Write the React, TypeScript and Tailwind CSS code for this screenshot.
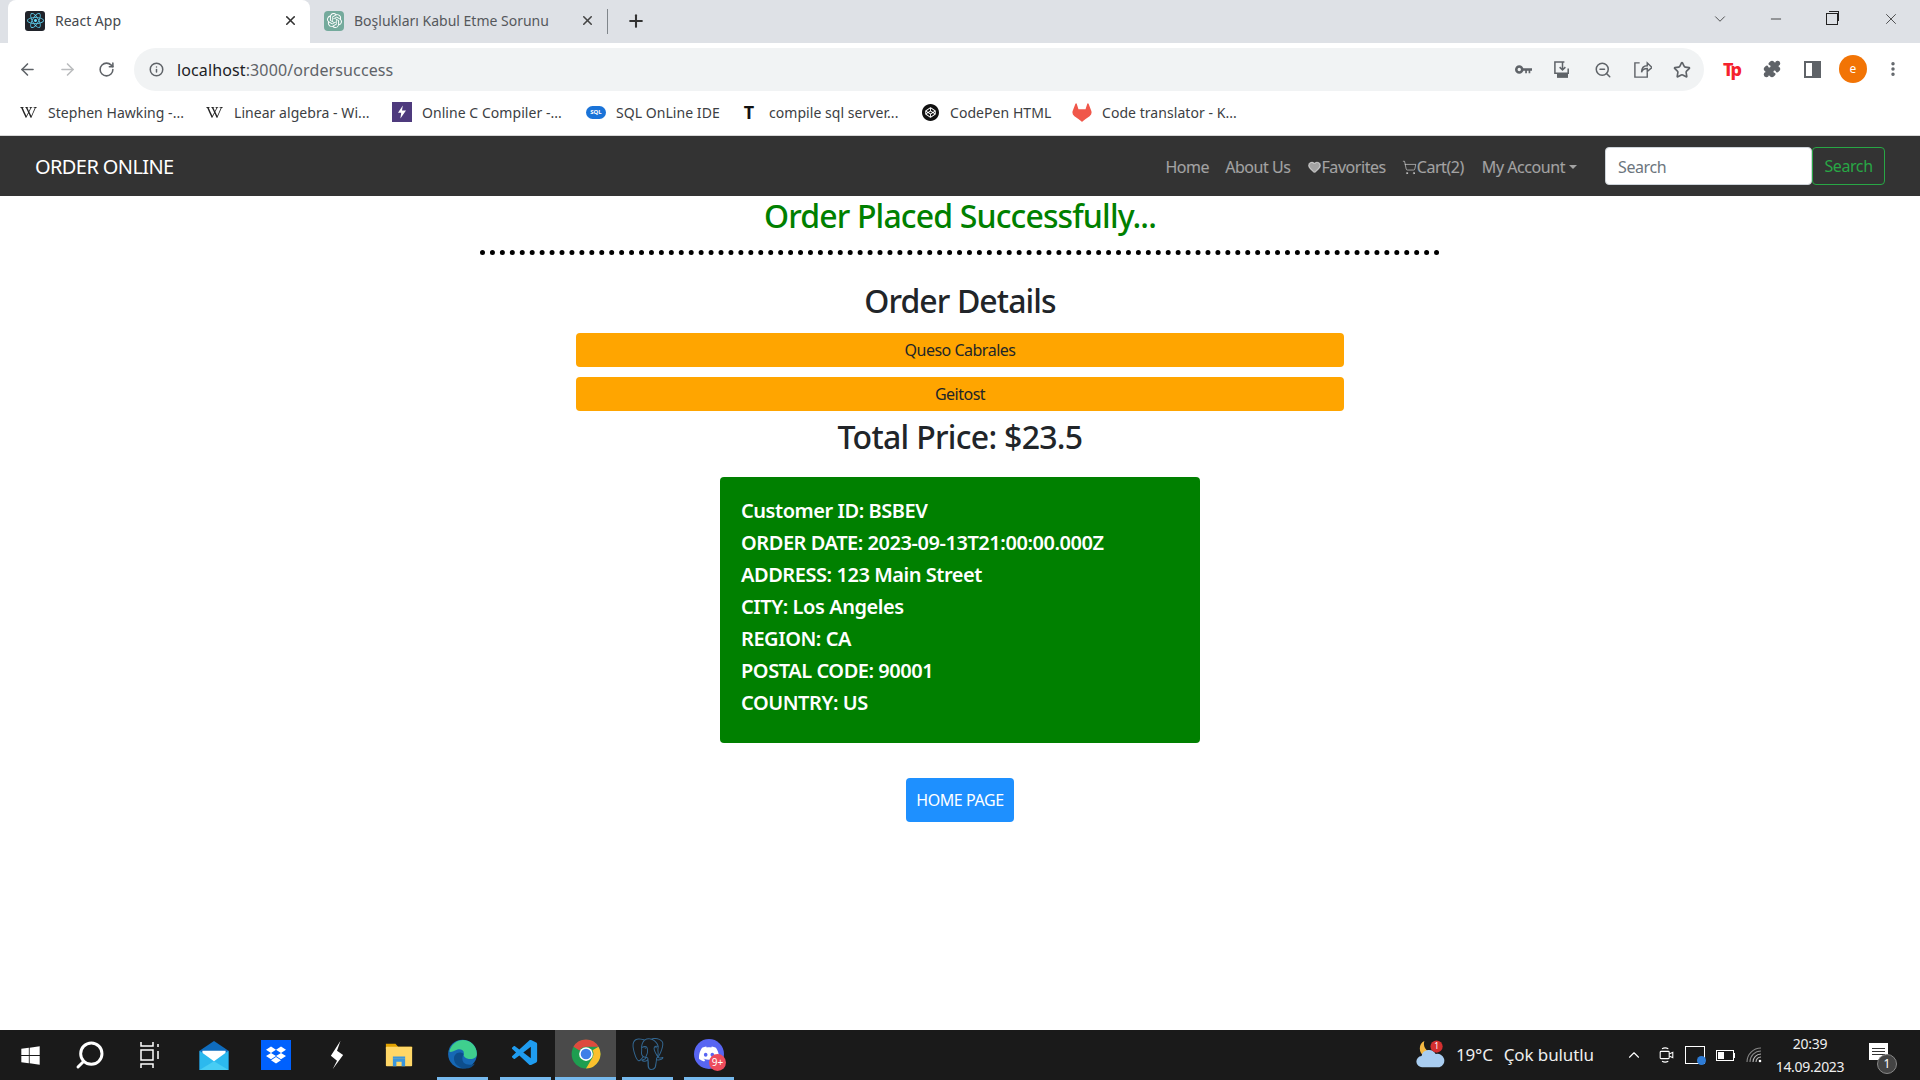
import { ArrowLeft, ArrowRight, RotateCw, Info, Star, ZoomOut, Puzzle, X, Plus, ChevronDown, Minus, MoreVertical, ShoppingCart, Heart, Search, ChevronUp } from "lucide-react";
import { FaReact, FaWindows } from "react-icons/fa";
import { SiOpenai, SiDropbox, SiCodepen, SiGitlab, SiPostgresql, SiDiscord, SiWikipedia } from "react-icons/si";
import { VscVscode } from "react-icons/vsc";

const font = "font-['Noto_Sans',sans-serif]";

function Chrome() {
  return (
    <svg viewBox="0 0 48 48" className="w-[30px] h-[30px]">
      <circle cx="24" cy="24" r="23" fill="#1e9e50" />
      <path d="M24 1a23 23 0 0 1 20 11.500H24a12 12 0 0 0-10.400 6L4 12.500A23 23 0 0 1 24 1z" fill="#dd4b3e" />
      <path d="M44 12.500A23 23 0 0 1 24 47l10.400-17.500A12 12 0 0 0 34.400 18z" fill="#fbc02d" />
      <circle cx="24" cy="24" r="11" fill="#fff" />
      <circle cx="24" cy="24" r="8.500" fill="#3f7fe8" />
    </svg>
  );
}

function Edge() {
  return (
    <svg viewBox="0 0 48 48" className="w-[31px] h-[30px]">
      <circle cx="24" cy="24" r="23" fill="#1668b5" />
      <path d="M3 20C6 6 20-2 33 3c10 4 14 13 14 21 0 6-6 9-13 8-7-1-9-5-8-9 1-5-5-8-11-6-5 2-10 5-12 3z" fill="#3fcf8e" />
      <path d="M26 24c-4-4-12-3-15 3-3 8 4 20 18 20 7 0 12-3 15-8-5 3-14 3-18-1-3-4-3-10 0-14z" fill="#0d4e8c" />
    </svg>
  );
}

function Folder() {
  return (
    <svg viewBox="0 0 32 32" className="w-[28px] h-[24px]" preserveAspectRatio="none">
      <path d="M1 1h11l3 4h16v3H1z" fill="#e0a100" />
      <rect x="1" y="5" width="30" height="26" rx="1" fill="#ffd767" />
      <path d="M9 31v-10h14v10h-4v-6h-6v6z" fill="#3a96dd" />
      <rect x="9" y="18" width="14" height="3" fill="#3a96dd" />
    </svg>
  );
}

function Mail() {
  return (
    <svg viewBox="0 0 30 30" className="w-[30px] h-[29px]">
      <path d="M0 10 15 0l15 10v20H0z" fill="#0f6cbd" />
      <path d="M3 10h24v8L15 24 3 18z" fill="#fff" />
      <path d="M0 10l15 11 15-11v20H0z" fill="#2cb9ee" />
      <path d="M0 30l15-9 15 9z" fill="#47cdf4" />
    </svg>
  );
}

function Weather() {
  return (
    <svg viewBox="0 0 32 32" className="w-[30px] h-[30px]">
      <path d="M10 1a9 9 0 0 0 8 12l-8 4a9 9 0 0 1 0-16z" fill="#f5b942" />
      <path d="M8 29a6 6 0 0 1-1-12 8 8 0 0 1 15-2 7 7 0 0 1 4 14z" fill="#a9cdf0" />
      <circle cx="23" cy="7" r="6.500" fill="#d32f2f" />
      <text x="23" y="10" fontSize="9" fill="#fff" textAnchor="middle" fontFamily="Noto Sans">1</text>
    </svg>
  );
}

const bookmarks = [
  { label: "Stephen Hawking -...", icon: <SiWikipedia className="w-[17px] h-[17px] text-[#222]" />, cls: "w-[186px]" },
  { label: "Linear algebra - Wi...", icon: <SiWikipedia className="w-[17px] h-[17px] text-[#222]" />, cls: "w-[188px]" },
  {
    label: "Online C Compiler -...",
    icon: (
      <span className="w-[20px] h-[20px] bg-[#4e3a7d] flex items-center justify-center">
        <svg viewBox="0 0 10 16" className="w-[8px] h-[14px]"><path d="M6 0 0 9h4l-1 7 7-10H5z" fill="#fff" /></svg>
      </span>
    ),
    cls: "w-[194px]",
  },
  { label: "SQL OnLine IDE", icon: <span className="w-[20px] h-[13px] rounded-full bg-[#1a73d8] text-white text-[6px] font-bold flex items-center justify-center">SQL</span>, cls: "w-[153px]" },
  { label: "compile sql server...", icon: <span className="w-[20px] text-center text-[18px] font-bold text-[#111]">T</span>, cls: "w-[181px]" },
  { label: "CodePen HTML", icon: <SiCodepen className="w-[17px] h-[17px] text-[#111]" />, cls: "w-[152px]" },
  { label: "Code translator - K...", icon: <SiGitlab className="w-[20px] h-[19px] text-[#f0574a]" />, cls: "w-[180px]" },
];

const details = [
  "Customer ID: BSBEV",
  "ORDER DATE: 2023-09-13T21:00:00.000Z",
  "ADDRESS: 123 Main Street",
  "CITY: Los Angeles",
  "REGION: CA",
  "POSTAL CODE: 90001",
  "COUNTRY: US",
];

export default function App() {
  return (
    <div className={`h-screen w-full flex flex-col overflow-hidden bg-white ${font}`}>
      {/* tab strip */}
      <div className="h-[43px] bg-[#dee1e6] flex items-stretch shrink-0">
        <div className="ml-[8px] w-[302px] bg-white rounded-t-[8px] flex items-center pl-[17px] pr-[12px] pb-[2px]">
          <span className="w-[20px] h-[20px] bg-[#20232a] rounded-[3px] flex items-center justify-center">
            <FaReact className="w-[17px] h-[17px] text-[#61dafb]" />
          </span>
          <span className="ml-[10px] text-[14px] text-[#45494d] flex-1">React App</span>
          <X className="w-[15px] h-[15px] text-[#333]" strokeWidth={2.5} />
        </div>
        <div className="w-[297px] flex items-center pl-[14px] pr-[12px] pb-[2px]">
          <span className="w-[20px] h-[20px] bg-[#74aa9c] rounded-[4px] flex items-center justify-center">
            <SiOpenai className="w-[15px] h-[15px] text-white" />
          </span>
          <span className="ml-[10px] text-[14px] text-[#55585c] flex-1">Boşlukları Kabul Etme Sorunu</span>
          <X className="w-[15px] h-[15px] text-[#444]" strokeWidth={2.5} />
        </div>
        <div className="self-center w-px h-[25px] bg-[#80868b]" />
        <div className="ml-[18px] flex items-center pb-[2px]">
          <Plus className="w-[20px] h-[20px] text-[#333]" strokeWidth={2.5} />
        </div>
        <div className="flex-1" />
        <div className="flex items-center pb-[6px] text-[#222]">
          <ChevronDown className="w-[18px] h-[18px] mr-[39px]" strokeWidth={1} />
          <Minus className="w-[16px] h-[16px] mr-[42px]" strokeWidth={1.2} />
          <span className="relative w-[12px] h-[12px] border border-[#222] mr-[44px] mt-[1px] bg-[#dee1e6]">
            <span className="absolute -top-[3px] left-[2px] w-[10px] h-[10px] border-t border-r border-[#222]" />
          </span>
          <X className="w-[18px] h-[18px] mr-[20px]" strokeWidth={1} />
        </div>
      </div>

      {/* address row */}
      <div className="h-[48px] flex items-center shrink-0 bg-white">
        <ArrowLeft className="ml-[18px] mt-[4px] w-[19px] h-[19px] text-[#5f6368]" />
        <ArrowRight className="ml-[21px] mt-[4px] w-[19px] h-[19px] text-[#babcbe]" />
        <RotateCw className="ml-[21px] mt-[4px] w-[17px] h-[17px] text-[#5f6368]" strokeWidth={2.2} />
        <div className="ml-[19px] mt-[5px] w-[1570px] h-[43px] bg-[#f1f3f4] rounded-full flex items-center pl-[15px]">
          <Info className="w-[15px] h-[15px] text-[#5f6368]" strokeWidth={2.4} />
          <span className="ml-[13px] text-[16px] tracking-[0.12px] text-[#202124]">localhost<span className="text-[#5f6368]">:3000/ordersuccess</span></span>
          <div className="flex-1" />
          <svg viewBox="0 0 20 12" className="w-[17px] h-[11px] text-[#5f6368]"><circle cx="5" cy="6" r="3.500" fill="none" stroke="currentColor" strokeWidth="3" /><path d="M8 4.500h12v3h-2v3h-2v-3h-2v3h-2v-3H8z" fill="currentColor" /></svg>
          <svg viewBox="0 0 20 20" fill="none" stroke="#5f6368" strokeWidth="1.600" className="ml-[21px] w-[19px] h-[19px]"><path d="M12 2H2v12h14V9M10 3v7M7 7.500l3 3 3-3" /><rect x="5" y="15" width="10" height="3" fill="#5f6368" /></svg>
          <ZoomOut className="ml-[22px] w-[18px] h-[18px] text-[#5f6368]" />
          <svg viewBox="0 0 20 20" fill="none" stroke="#5f6368" strokeWidth="1.500" className="ml-[21px] w-[19px] h-[19px]"><path d="M7 3H2v15h13v-5M9 13c0-5 3-7 6-7V3l5 5-5 4V9c-2 0-5 1-6 4z" /></svg>
          <Star className="ml-[21px] w-[18px] h-[18px] text-[#5f6368]" strokeWidth={2.2} />
          <div className="w-[13px]" />
        </div>
        <span className="ml-[19px] mt-[4px] w-[22px] text-[#f5222d] text-[18px] font-extrabold tracking-[-2px] leading-none">Tp</span>
        <Puzzle className="ml-[18px] mt-[4px] w-[18px] h-[18px] text-[#5f6368] fill-[#5f6368]" />
        <span className="ml-[23px] mt-[4px] w-[17px] h-[17px] border-[2px] border-[#5f6368] flex justify-end">
          <span className="w-[7px] h-full bg-[#5f6368]" />
        </span>
        <span className="ml-[18px] mt-[4px] w-[28px] h-[28px] rounded-full bg-[#f27405] text-white text-[12px] flex items-center justify-center">e</span>
        <MoreVertical className="ml-[17px] mt-[4px] w-[18px] h-[18px] text-[#5f6368]" strokeWidth={2.6} />
      </div>

      {/* bookmarks */}
      <div className="h-[42px] flex items-center pl-[18px] pb-[2px] shrink-0 bg-white border-b border-[#d8d8d8] box-content">
        {bookmarks.map((b) => (
          <div key={b.label} className={`${b.cls} flex items-center gap-[10px] shrink-0 overflow-hidden`}>
            <span className="w-[20px] flex justify-center shrink-0">{b.icon}</span>
            <span className="text-[14px] tracking-[0.05px] text-[#3c4043] whitespace-nowrap">{b.label}</span>
          </div>
        ))}
      </div>

      {/* navbar */}
      <nav className="h-[60px] bg-[#333333] flex items-center pl-[35px] pr-[35px] shrink-0">
        <span className="text-[20px] text-white tracking-[-0.6px] mt-[2px]">ORDER ONLINE</span>
        <div className="flex-1" />
        <div className="flex items-center text-[16px] text-white/55 tracking-[-0.45px] mr-[20px] mt-[2px]">
          <a className="px-2">Home</a>
          <a className="px-2">About Us</a>
          <a className="px-2 flex items-center"><Heart className="w-[15px] h-[14px] fill-current" />Favorites</a>
          <a className="px-2 flex items-center"><ShoppingCart className="w-[15px] h-[15px]" strokeWidth={1.5} />Cart(2)</a>
          <a className="pl-[10px] pr-2 flex items-center">My Account<span className="ml-[4px] border-x-[4px] border-x-transparent border-t-[4px] border-t-current" /></a>
        </div>
        <div className="w-[207px] h-[38px] bg-white rounded-[4px] border border-[#ced4da] flex items-center pl-[12px] pt-[2px] text-[16px] text-[#6c757d] tracking-[-0.4px]">Search</div>
        <button className="w-[73px] h-[38px] rounded-[4px] border border-[#28a745] text-[#28a745] text-[16px] tracking-[-0.4px]">Search</button>
      </nav>

      {/* page */}
      <main className="flex-1 flex flex-col items-center text-[#212529] min-h-0">
        <h2 className="text-[32px] font-medium leading-[38px] mt-[1px] text-[#008000] tracking-[-0.85px]">Order Placed Successfully...</h2>
        <hr className="w-[960px] mt-[15px] border-0 border-t-[5px] border-dotted border-black" />
        <h2 className="text-[32px] font-medium leading-[38px] mt-[27px] tracking-[-0.9px]">Order Details</h2>
        <div className="w-[768px] h-[34px] mt-[13px] bg-[#ffa500] rounded-[4px] flex items-center justify-center text-[16px] text-[#212529] tracking-[-0.5px]">Queso Cabrales</div>
        <div className="w-[768px] h-[34px] mt-[10px] bg-[#ffa500] rounded-[4px] flex items-center justify-center text-[16px] text-[#212529] tracking-[-0.5px]">Geitost</div>
        <h2 className="text-[32px] font-medium leading-[38px] mt-[7px] tracking-[-0.7px]">Total Price: $23.5</h2>
        <div className="w-[480px] h-[266px] mt-[21px] bg-[#008000] rounded-[4px] pt-[18px] pl-[21px] text-white text-[20px] font-semibold leading-[32px] tracking-[-0.45px]">
          {details.map((d) => (
            <div key={d}>{d}</div>
          ))}
        </div>
        <button className="w-[108px] h-[44px] mt-[35px] bg-[#1e90ff] rounded-[4px] text-white text-[16px] tracking-[-0.4px]">HOME PAGE</button>
      </main>

      {/* taskbar */}
      <footer className="h-[50px] bg-[#1a1a1a] flex items-stretch shrink-0 text-white">
        <div className="w-[60px] flex items-center justify-center"><FaWindows className="w-[21px] h-[21px]" /></div>
        <div className="w-[60px] flex items-center justify-center"><Search className="w-[32px] h-[32px] -scale-x-100" strokeWidth={2.2} /></div>
        <div className="w-[60px] flex items-center justify-center">
          <svg viewBox="0 0 20 28" fill="none" stroke="#fff" strokeWidth="1.500" className="w-[20px] h-[28px]"><path d="M1 1v4h12V1M1 27v-4h12v4" /><rect x="1" y="9" width="12" height="10" /><path d="M18 3v3M18 10v8" /></svg>
        </div>
        <div className="w-[60px] ml-[4px] flex items-center justify-center"><Mail /></div>
        <div className="w-[60px] flex items-center justify-center ml-[2px]">
          <span className="w-[30px] h-[30px] bg-[#0061fe] flex items-center justify-center"><SiDropbox className="w-[20px] h-[20px] text-white" /></span>
        </div>
        <div className="w-[50px] flex items-center justify-center ml-[6px]">
          <svg viewBox="0 0 16 42" className="w-[14px] h-[30px]" preserveAspectRatio="none"><path d="M12 1 1 22l7 7-5 12 12-20-7-6z" fill="#fff" /></svg>
        </div>
        <div className="w-[61px] flex items-center justify-center ml-[6px]"><Folder /></div>
        <div className="w-[51px] ml-[8px] flex items-center justify-center border-b-[3px] border-[#76b9ed]"><Edge /></div>
        <div className="w-[51px] ml-[12px] flex items-center justify-center border-b-[3px] border-[#76b9ed]"><VscVscode className="w-[31px] h-[31px] text-[#1f9cf0]" /></div>
        <div className="w-[61px] ml-[4px] bg-[#4a4a4a] flex items-center justify-center border-b-[3px] border-[#76b9ed]"><Chrome /></div>
        <div className="w-[51px] ml-[6px] flex items-center justify-center border-b-[3px] border-[#76b9ed]"><SiPostgresql className="w-[32px] h-[32px] text-[#336791]" /></div>
        <div className="w-[50px] ml-[11px] flex items-center justify-center border-b-[3px] border-[#76b9ed]">
          <span className="relative w-[30px] h-[30px] rounded-full bg-[#5865f2] flex items-center justify-center">
            <SiDiscord className="w-[20px] h-[20px] text-white" />
            <span className="absolute -right-[2px] -bottom-[2px] w-[17px] h-[17px] rounded-full bg-[#ed4c5c] text-[10px] leading-[17px] text-center">9+</span>
          </span>
        </div>
        <div className="flex-1" />
        <div className="flex items-center"><Weather /></div>
        <span className="ml-[11px] self-center text-[17px] tracking-[-0.2px] text-[#eee]">19°C</span>
        <span className="ml-[11px] self-center text-[17px] tracking-[-0.1px] text-[#eee]">Çok bulutlu</span>
        <div className="ml-[31px] flex items-center"><ChevronUp className="w-[18px] h-[18px]" strokeWidth={1.5} /></div>
        <div className="ml-[16px] flex items-center">
          <svg viewBox="0 0 16 20" fill="none" stroke="#fff" strokeWidth="1.200" className="w-[15px] h-[18px]">
            <rect x="1" y="6" width="10" height="8" rx="1" /><path d="M11 9l4-2v6l-4-2M3 3c2-1 5-1 7 0M3 17c2 1 5 1 7 0" />
          </svg>
        </div>
        <div className="ml-[11px] flex items-center">
          <span className="relative w-[20px] h-[18px] border border-white">
            <span className="absolute -right-[2px] -bottom-[2px] w-[9px] h-[9px] rounded-full bg-[#2e7cd6]" />
          </span>
        </div>
        <div className="ml-[11px] flex items-center">
          <span className="w-[18px] h-[11px] border border-white p-[1px]"><span className="block w-[6px] h-full bg-white" /></span>
          <span className="w-[1px] h-[5px] bg-white" />
        </div>
        <div className="ml-[11px] flex items-center">
          <svg viewBox="0 0 16 16" fill="none" stroke="#bbb" strokeWidth="1.100" className="w-[16px] h-[16px]">
            <path d="M1 15A14 14 0 0 1 15 1M4 15A11 11 0 0 1 15 4" stroke="#888" /><path d="M7 15a8 8 0 0 1 8-8M10 15a5 5 0 0 1 5-5" /><circle cx="14" cy="14" r="1.300" fill="#fff" stroke="none" />
          </svg>
        </div>
        <div className="w-[96px] flex flex-col items-center justify-center text-[14px] leading-[23px] tracking-[-0.3px] text-[#eee]">
          <span>20:39</span>
          <span>14.09.2023</span>
        </div>
        <div className="ml-[10px] flex items-center w-[52px] relative">
          <span className="ml-[1px] mb-[8px] w-[19px] h-[17px] bg-white flex flex-col gap-[2px] justify-center px-[3px]">
            <span className="h-px bg-[#333]" /><span className="h-px bg-[#333]" /><span className="h-px bg-[#333]" />
          </span>
          <span className="absolute left-[9px] top-[24px] w-[20px] h-[20px] rounded-full bg-[#444] border border-[#888] text-[12px] leading-[18px] text-center">1</span>
        </div>
      </footer>
    </div>
  );
}
